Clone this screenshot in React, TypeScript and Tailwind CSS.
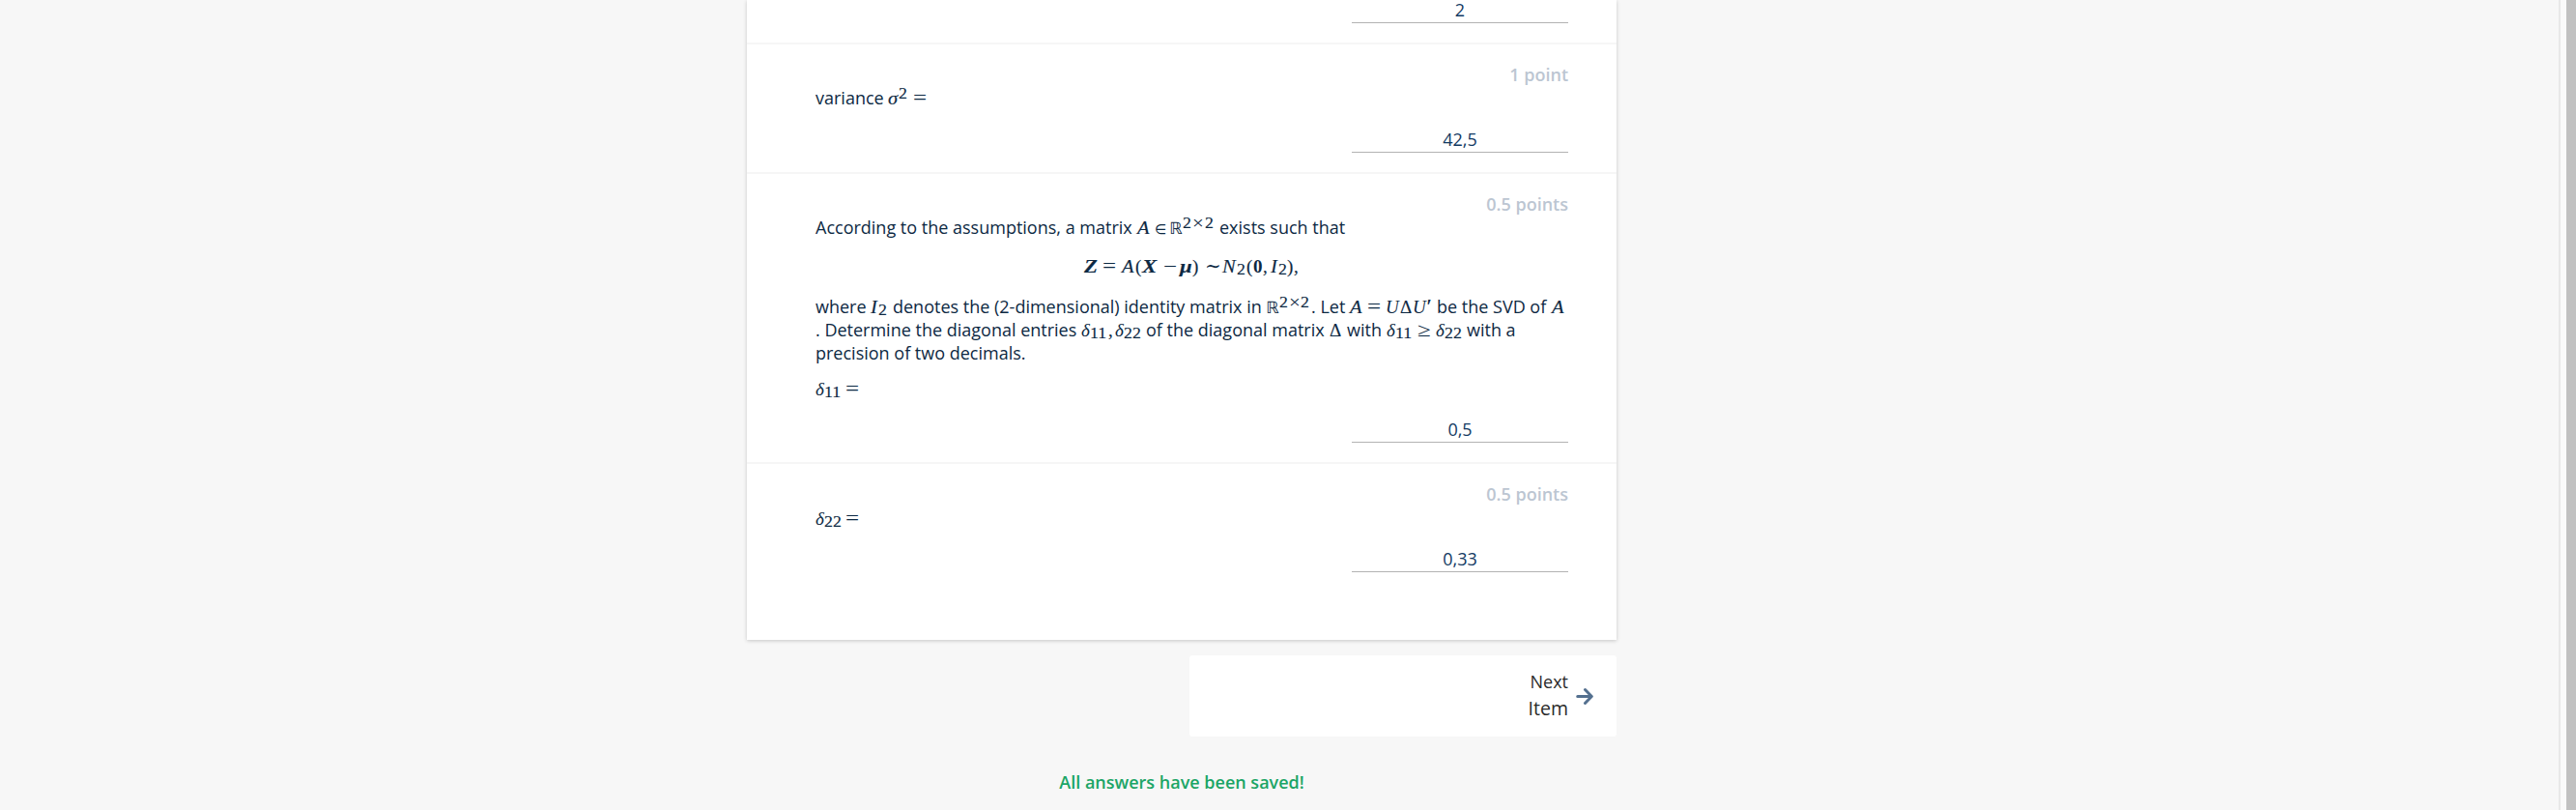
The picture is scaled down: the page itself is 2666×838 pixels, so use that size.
import React from 'react';

type Glyph = [width: string, char: string, style?: string];

const STROKE = '[-webkit-text-stroke:0.15px_#0d2943] origin-left';
const SUP = `text-[17px] align-[6px] scale-x-105 ${STROKE}`;
const TIMES = 'text-[19px] align-[5px] scale-x-110 origin-left';
const SUB = `text-[17px] align-[-2px] scale-x-105 ${STROKE}`;
const IT = `italic text-[19px] scale-x-[1.08] ${STROKE}`;
const DE = 'italic text-[19px]';
const BI = `italic font-bold text-[19px] scale-x-[1.2] ${STROKE}`;
const RM = `text-[19px] ${STROKE}`;
const BB = "text-[17px] font-['DejaVu_Sans']";
const OP = 'text-[20px] scale-x-[1.25] origin-left';
const IN = "text-[14px] font-['DejaVu_Sans']";

function Cell({ g }: { g: Glyph }) {
  return (
    <span className={`inline-block whitespace-nowrap text-left leading-[0] ${g[0]} ${g[2] ?? RM}`}>{g[1]}</span>
  );
}

function M({ children }: { children: Glyph[] }) {
  return (
    <span className="whitespace-nowrap font-['Liberation_Serif','DejaVu_Serif',serif]">
      {children.map((g, i) => (
        <Cell key={i} g={g} />
      ))}
    </span>
  );
}

function T({ w, children }: { w: string; children: string }) {
  return <span className={`inline-block whitespace-pre ${w}`}>{children}</span>;
}

function Line({ className = '', children }: { className?: string; children: React.ReactNode }) {
  return (
    <div
      className={`flex h-6 items-baseline whitespace-nowrap before:w-0 before:whitespace-pre before:content-['_'] ${className}`}
    >
      {children}
    </div>
  );
}

function Points({ children }: { children: string }) {
  return <div className="h-6 text-right font-semibold text-[#bcc6d2]">{children}</div>;
}

function Answer({ value, className = 'mt-[19px] h-[26px]' }: { value: string; className?: string }) {
  return (
    <div className={`ml-auto w-[224px] shrink-0 border-b border-[#b3b3b3] text-center text-[#133a63] ${className}`}>
      {value}
    </div>
  );
}

const section = 'flex flex-col border-b-2 border-[#f6f6f6] pl-[71px] pr-[50px]';

export default function App() {
  return (
    <div className="flex h-[838px] w-full overflow-hidden bg-[#f7f7f7] font-['Open_Sans',sans-serif] text-[18px] leading-6 text-[#0d2943]">
      <main className="ml-[773px] w-[900px]">
        <div className="h-[662px] bg-white shadow-[0_1px_4px_rgba(0,0,0,0.2)]">
          <section className={`h-[46px] justify-end pb-5 ${section}`}>
            <Answer value="2" className="h-6 leading-5" />
          </section>

          <section className={`h-[134px] pt-[19px] ${section}`}>
            <Points>1 point</Points>
            <Line>
              <T w="w-[75px]">variance</T>
              <M>{[['w-[11px]', 'σ', IT], ['w-[15px]', '2', SUP], ['w-[16px]', '=', OP]]}</M>
            </Line>
            <Answer value="42,5" />
          </section>

          <section className={`h-[300px] pt-[19px] ${section}`}>
            <Points>0.5 points</Points>
            <Line>
              <T w="w-[333px]">According to the assumptions, a matrix</T>
              <M>
                {[
                  ['w-[18px]', 'A', IT],
                  ['w-[15px]', '∈', IN],
                  ['w-[14px]', 'ℝ', BB],
                  ['w-[10px]', '2', SUP],
                  ['w-[13px]', '×', TIMES],
                  ['w-[15px]', '2', SUP],
                ]}
              </M>
              <T w="w-[135px]">exists such that</T>
            </Line>
            <Line className="mt-4 pl-[278px]">
              <M>
                {[
                  ['w-[19px]', 'Z', BI],
                  ['w-[20px]', '=', OP],
                  ['w-[14px]', 'A', IT],
                  ['w-[7px]', '(', RM],
                  ['w-[22px]', 'X', BI],
                  ['w-[17px]', '−', OP],
                  ['w-[13px]', 'μ', BI],
                  ['w-[13px]', ')', RM],
                  ['w-[18px]', '∼', 'text-[20px]'],
                  ['w-[15px]', 'N', IT],
                  ['w-[10px]', '2', SUB],
                  ['w-[7px]', '(', RM],
                  ['w-[10px]', '0', 'font-bold text-[19px]'],
                  ['w-[8px]', ',', RM],
                  ['w-[8px]', 'I', IT],
                  ['w-[9px]', '2', SUB],
                  ['w-[7px]', ')', RM],
                  ['w-[6px]', ',', RM],
                ]}
              </M>
            </Line>
            <Line className="mt-[18px]">
              <T w="w-[57px]">where</T>
              <M>{[['w-[8px]', 'I', IT], ['w-[15px]', '2', SUB]]}</M>
              <T w="w-[386px]">denotes the (2-dimensional) identity matrix in</T>
              <M>{[['w-[14px]', 'ℝ', BB], ['w-[10px]', '2', SUP], ['w-[12px]', '×', TIMES], ['w-[11px]', '2', SUP]]}</M>
              <T w="w-[40px]">. Let</T>
              <M>
                {[
                  ['w-[18px]', 'A', IT],
                  ['w-[19px]', '=', OP],
                  ['w-[15px]', 'U', 'italic text-[19px]'],
                  ['w-[13px]', 'Δ', RM],
                  ['w-[14px]', 'U', 'italic text-[19px]'],
                  ['w-[11px]', '′', 'italic font-bold text-[20px]'],
                ]}
              </M>
              <T w="w-[119px]">be the SVD of</T>
              <M>{[['w-[14px]', 'A', IT]]}</M>
            </Line>
            <Line>
              <T w="w-[275px]">. Determine the diagonal entries</T>
              <M>
                {[
                  ['w-[9px]', 'δ', DE],
                  ['w-[19px]', '11', SUB],
                  ['w-[7px]', ',', RM],
                  ['w-[9px]', 'δ', DE],
                  ['w-[23px]', '22', SUB],
                ]}
              </M>
              <T w="w-[190px]">of the diagonal matrix</T>
              <M>{[['w-[18px]', 'Δ', RM]]}</M>
              <T w="w-[41px]">with</T>
              <M>
                {[
                  ['w-[9px]', 'δ', DE],
                  ['w-[23px]', '11', SUB],
                  ['w-[19px]', '≥', OP],
                  ['w-[9px]', 'δ', DE],
                  ['w-[23px]', '22', SUB],
                ]}
              </M>
              <T w="w-[52px]">with a</T>
            </Line>
            <Line>
              <T w="w-[220px]">precision of two decimals.</T>
            </Line>
            <Line className="mt-[13px]">
              <M>{[['w-[9px]', 'δ', DE], ['w-[22px]', '11', SUB], ['w-[16px]', '=', OP]]}</M>
            </Line>
            <Answer value="0,5" className="mt-[18px] h-[26px]" />
          </section>

          <section className="flex flex-col pl-[71px] pr-[50px] pt-[19px]">
            <Points>0.5 points</Points>
            <Line className="mt-px">
              <M>{[['w-[9px]', 'δ', DE], ['w-[22px]', '22', SUB], ['w-[16px]', '=', OP]]}</M>
            </Line>
            <Answer value="0,33" className="mt-[18px] h-[26px]" />
          </section>
        </div>

        <button className="ml-auto mt-4 flex h-[84px] w-[442px] items-center justify-end rounded-[3px] bg-white pr-6 text-right text-[#2b2b2b]">
          <span className="flex flex-col pb-0.5">
            <span className="h-[27px] text-[18px] leading-[27px]">Next</span>
            <span className="h-7 text-[19.5px] leading-7">Item</span>
          </span>
          <svg className="ml-2 h-[18px] w-[18px]" viewBox="0 0 18 18" fill="none" stroke="#54708f" strokeWidth="3" strokeLinecap="round" strokeLinejoin="round">
            <path d="M1.7 9.5H16M9.5 2.5L16.3 9.5L9.5 16.5" />
          </svg>
        </button>

        <p className="mt-[35px] text-center font-semibold text-[#1ba566]">All answers have been saved!</p>
      </main>
      <div className="ml-auto h-full w-[18px] border-l-2 border-[#e8e8e8] bg-[#fafafa] pl-[6px]">
        <div className="h-full w-[10px] bg-[#c1c1c1]" />
      </div>
    </div>
  );
}
